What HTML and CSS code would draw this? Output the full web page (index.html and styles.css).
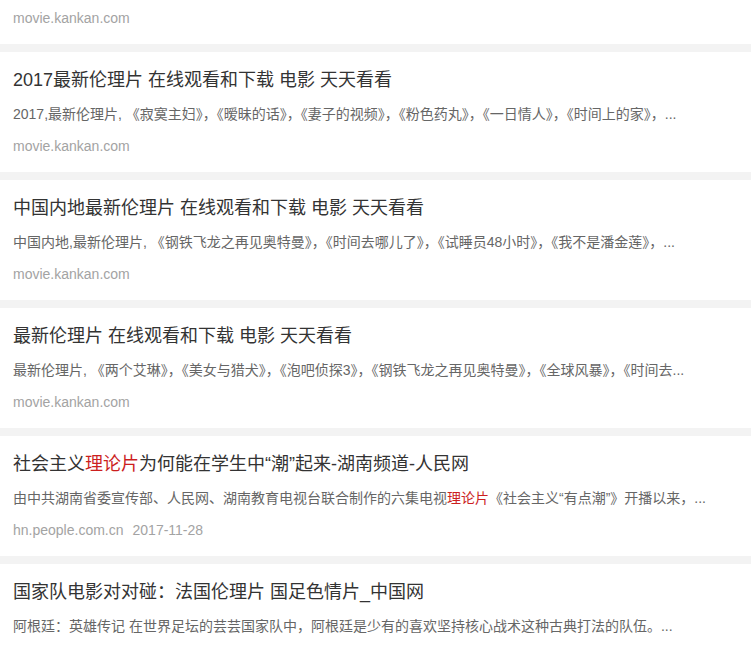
FILE: index.html
```html
<!DOCTYPE html>
<html lang="zh-CN">
<head>
<meta charset="utf-8">
<title>搜索结果</title>
<link rel="stylesheet" href="styles.css">
</head>
<body>
<div class="list">
  <div class="card card-cut">
    <div class="meta"><span class="site">movie.kankan.com</span></div>
  </div>
  <div class="card">
    <div class="title">2017最新伦理片 在线观看和下载 电影 天天看看</div>
    <div class="desc">2017,最新伦理片, 《寂寞主妇》，《暧昧的话》，《妻子的视频》，《粉色药丸》，《一日情人》，《时间上的家》，...</div>
    <div class="meta"><span class="site">movie.kankan.com</span></div>
  </div>
  <div class="card">
    <div class="title">中国内地最新伦理片 在线观看和下载 电影 天天看看</div>
    <div class="desc">中国内地,最新伦理片, 《钢铁飞龙之再见奥特曼》，《时间去哪儿了》，《试睡员48小时》，《我不是潘金莲》，...</div>
    <div class="meta"><span class="site">movie.kankan.com</span></div>
  </div>
  <div class="card">
    <div class="title">最新伦理片 在线观看和下载 电影 天天看看</div>
    <div class="desc">最新伦理片, 《两个艾琳》，《美女与猎犬》，《泡吧侦探3》，《钢铁飞龙之再见奥特曼》，《全球风暴》，《时间去...</div>
    <div class="meta"><span class="site">movie.kankan.com</span></div>
  </div>
  <div class="card">
    <div class="title">社会主义<em class="hl">理论片</em>为何能在学生中“潮”起来-湖南频道-人民网</div>
    <div class="desc">由中共湖南省委宣传部、人民网、湖南教育电视台联合制作的六集电视<em class="hl">理论片</em>《社会主义“有点潮”》开播以来，...</div>
    <div class="meta"><span class="site">hn.people.com.cn</span><span class="date">2017-11-28</span></div>
  </div>
  <div class="card card-last">
    <div class="title">国家队电影对对碰：法国伦理片 国足色情片_中国网</div>
    <div class="desc">阿根廷：英雄传记 在世界足坛的芸芸国家队中，阿根廷是少有的喜欢坚持核心战术这种古典打法的队伍。...</div>
  </div>
</div>
</body>
</html>
```

FILE: styles.css
```css
html, body {
  margin: 0;
  padding: 0;
}
body {
  background: #f3f3f3;
  font-family: "Liberation Sans", Arial, "Noto Sans CJK SC", sans-serif;
  overflow: hidden;
}
.list {
  display: flex;
  flex-direction: column;
  gap: 8px;
}
.card {
  background: #fff;
  padding: 16px 13px;
  display: flex;
  flex-direction: column;
  gap: 12px;
}
.card-cut {
  padding-top: 8px;
}
.card-last {
  padding-bottom: 48px;
}
.title {
  font-size: 18px;
  line-height: 24px;
  color: #333;
  white-space: nowrap;
  overflow: hidden;
}
.desc {
  font-size: 14px;
  line-height: 20px;
  color: #666;
  white-space: nowrap;
  overflow: hidden;
}
.meta {
  font-size: 14px;
  line-height: 20px;
  color: #a3a3a3;
  display: flex;
  gap: 9px;
}
.hl {
  font-style: normal;
  color: #cc1f1f;
}
```
